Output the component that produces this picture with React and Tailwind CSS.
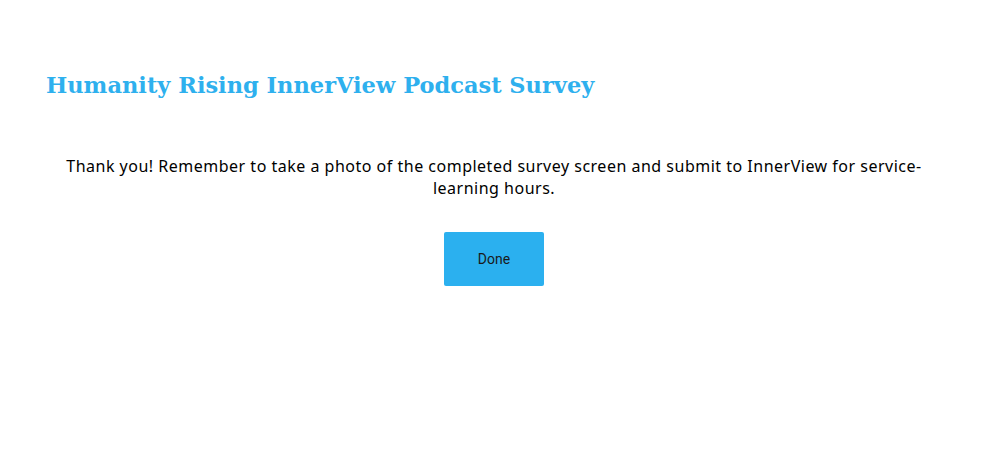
import React from "react";

function App() {
  return (
    <div className="min-h-[450px] w-full bg-white">
      <div className="ml-[46px] w-[896px] pt-[68px]">
        <h1
          className="text-[22.5px] font-bold leading-[34px] text-[#2eb0ee]"
          style={{ fontFamily: '"DejaVu Serif", "Liberation Serif", serif' }}
        >
          Humanity Rising InnerView Podcast Survey
        </h1>

        <div className="mt-[53px] flex flex-col items-center">
          <p
            className="text-center text-[16px] leading-[22px] tracking-[0.5px] text-black"
            style={{ fontFamily: '"Noto Sans", Roboto, sans-serif' }}
          >
            Thank you! Remember to take a photo of the completed survey screen
            and submit to InnerView for service-learning hours.
          </p>

          <button
            type="button"
            className="mt-[33px] h-[54px] w-[100px] rounded-[2px] bg-[#2bb0ef] text-[14px] text-[#1a1a1a]"
            style={{ fontFamily: "Roboto, sans-serif" }}
          >
            Done
          </button>
        </div>
      </div>
    </div>
  );
}

export default App;
